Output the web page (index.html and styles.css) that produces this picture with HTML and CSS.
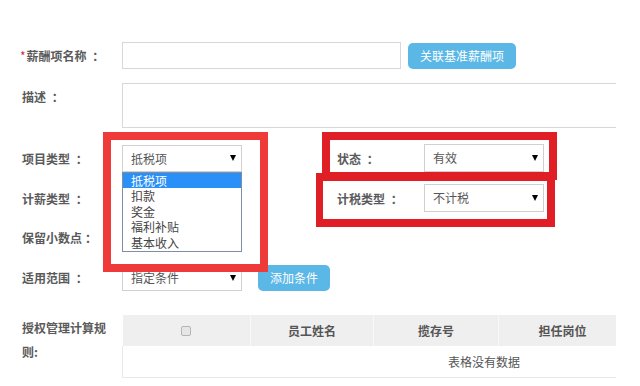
FILE: index.html
```html
<!DOCTYPE html>
<html lang="zh-CN">
<head>
  <meta charset="UTF-8" />
  <title>薪酬项</title>
  <link rel="stylesheet" href="styles.css">
</head>
<body>
  <div class="page">
    <div class="row row-name">
      <label class="label"><span class="req">*</span>薪酬项名称 <span class="colon">：</span></label>
      <input class="text-input" type="text">
      <button class="btn">关联基准薪酬项</button>
    </div>

    <div class="row row-desc">
      <label class="label">描述 <span class="colon">：</span></label>
      <textarea class="text-area"></textarea>
    </div>

    <div class="row row-type">
      <div class="field">
        <label class="label">项目类型 <span class="colon">：</span></label>
        <div class="select">
          <span>抵税项</span><i class="caret"></i>
          <ul class="dropdown">
            <li class="on">抵税项</li>
            <li>扣款</li>
            <li>奖金</li>
            <li>福利补贴</li>
            <li>基本收入</li>
          </ul>
        </div>
      </div>
      <div class="field">
        <label class="label label-right">状态 <span class="colon">：</span></label>
        <div class="select select-tall"><span>有效</span><i class="caret"></i></div>
      </div>
    </div>

    <div class="row row-pay">
      <div class="field">
        <label class="label">计薪类型 <span class="colon">：</span></label>
      </div>
      <div class="field">
        <label class="label label-right">计税类型 <span class="colon">：</span></label>
        <div class="select select-tall"><span>不计税</span><i class="caret"></i></div>
      </div>
    </div>

    <div class="row row-decimal">
      <label class="label">保留小数点<span class="colon">：</span></label>
    </div>

    <div class="row row-scope">
      <label class="label">适用范围 <span class="colon">：</span></label>
      <div class="select"><span>指定条件</span><i class="caret"></i></div>
      <button class="btn btn-small">添加条件</button>
    </div>

    <div class="row row-rules">
      <label class="label label-wrap">授权管理计算规则:</label>
      <div class="table-wrap">
        <table class="grid">
          <thead>
            <tr>
              <th class="col-check"><span class="check"></span></th>
              <th class="col-name">员工姓名</th>
              <th class="col-no">揽存号</th>
              <th class="col-post">担任岗位</th>
              <th></th>
            </tr>
          </thead>
          <tbody>
            <tr><td colspan="5">表格没有数据</td></tr>
          </tbody>
        </table>
      </div>
    </div>

    <div class="mark mark-1"></div>
    <div class="mark mark-2"></div>
    <div class="mark mark-3"></div>
  </div>
</body>
</html>
```

FILE: styles.css
```css
* {
  box-sizing: border-box;
}

body {
  margin: 0;
  background: #fff;
  color: #555;
  font-family: "Noto Sans CJK SC", "Microsoft YaHei", sans-serif;
  font-size: 12px;
}

.page {
  position: relative;
  width: 616px;
  height: 386px;
  padding-top: 42px;
  overflow: hidden;
}

.row {
  display: flex;
  align-items: center;
}

.field {
  display: flex;
  align-items: center;
  flex: none;
}

.field:first-child {
  width: 337px;
}

.label {
  flex: none;
  width: 122px;
  padding: 0 10px 0 22px;
  font-weight: bold;
  line-height: 17px;
  color: #5a5a5a;
  white-space: normal;
}

.colon {
  margin-left: 3px;
}

.label-right {
  width: 87px;
  padding: 0;
}

.req {
  color: #d62f36;
  margin-left: -2px;
  margin-right: 1px;
  font-weight: normal;
}

.row-name {
  height: 27px;
  margin-bottom: 14px;
}

.row-desc {
  align-items: flex-start;
  margin-bottom: 16px;
}

.row-desc .label {
  padding-top: 5px;
}

.row-type {
  height: 28px;
  margin-bottom: 12px;
}

.row-pay {
  height: 28px;
  margin-bottom: 12px;
}

.row-decimal {
  height: 27px;
  margin-bottom: 13px;
}

.row-scope {
  height: 27px;
  margin-bottom: 24px;
}

.row-rules {
  align-items: flex-start;
}

.label-wrap {
  padding-right: 14px;
  line-height: 24px;
  padding-top: 1px;
}

.text-input {
  flex: none;
  width: 279px;
  height: 27px;
  margin: 0;
  border: 1px solid #d8d8d8;
  outline: none;
}

.text-area {
  flex: none;
  width: 700px;
  height: 45px;
  margin: 0;
  border: 1px solid #d8d8d8;
  resize: none;
  outline: none;
}

.btn {
  flex: none;
  height: 26px;
  margin-left: 7px;
  padding: 0 12px;
  border: none;
  border-radius: 5px;
  background: #5bb7e6;
  color: #fff;
  font-family: inherit;
  font-size: 12px;
  line-height: 26px;
}

.btn-small {
  margin-left: 16px;
}

.select {
  position: relative;
  flex: none;
  width: 120px;
  height: 27px;
  padding-left: 8px;
  border: 1px solid #d0d0d0;
  line-height: 25px;
  color: #555;
}

.select-tall {
  height: 28px;
  line-height: 26px;
}

.caret {
  position: absolute;
  right: 5px;
  top: 50%;
  margin-top: -3px;
  border-left: 3.5px solid transparent;
  border-right: 3.5px solid transparent;
  border-top: 6px solid #000;
}

.dropdown {
  position: absolute;
  left: -1px;
  top: 26px;
  width: 120px;
  height: 80px;
  margin: 0;
  padding: 0;
  list-style: none;
  background: #fff;
  border: 1px solid #7d8ea6;
  z-index: 2;
}

.dropdown li {
  padding-left: 8px;
  line-height: 15.6px;
  color: #444;
}

.dropdown li.on {
  background: #2a8ff7;
  color: #fff;
}

.table-wrap {
  flex: none;
  width: 724px;
}

.grid {
  width: 724px;
  border-collapse: collapse;
  table-layout: fixed;
}

.grid th {
  height: 31px;
  background: #efefef;
  border-right: 1px solid #f8f8f8;
  font-weight: bold;
  color: #555;
}

.col-check {
  width: 128px;
}

.col-name {
  width: 123px;
}

.col-no {
  width: 125px;
}

.col-post {
  width: 128px;
}

.check {
  display: inline-block;
  width: 10px;
  height: 10px;
  margin-top: 4px;
  border: 1px solid #b5b5b5;
  border-radius: 2px;
  background: #e6e6e6;
}

.grid td {
  height: 31px;
  border: 1px solid #e8e8e8;
  border-top: none;
  text-align: center;
  color: #555;
}

.mark {
  position: absolute;
  border: 8px solid #e01e25;
  z-index: 3;
}

.mark-1 {
  left: 103px;
  top: 132px;
  width: 165px;
  height: 140px;
  border-color: #ee3a38;
}

.mark-2 {
  left: 322px;
  top: 132px;
  width: 235px;
  height: 48px;
}

.mark-3 {
  left: 316px;
  top: 173px;
  width: 239px;
  height: 54px;
  border-left-width: 7px;
}
```
